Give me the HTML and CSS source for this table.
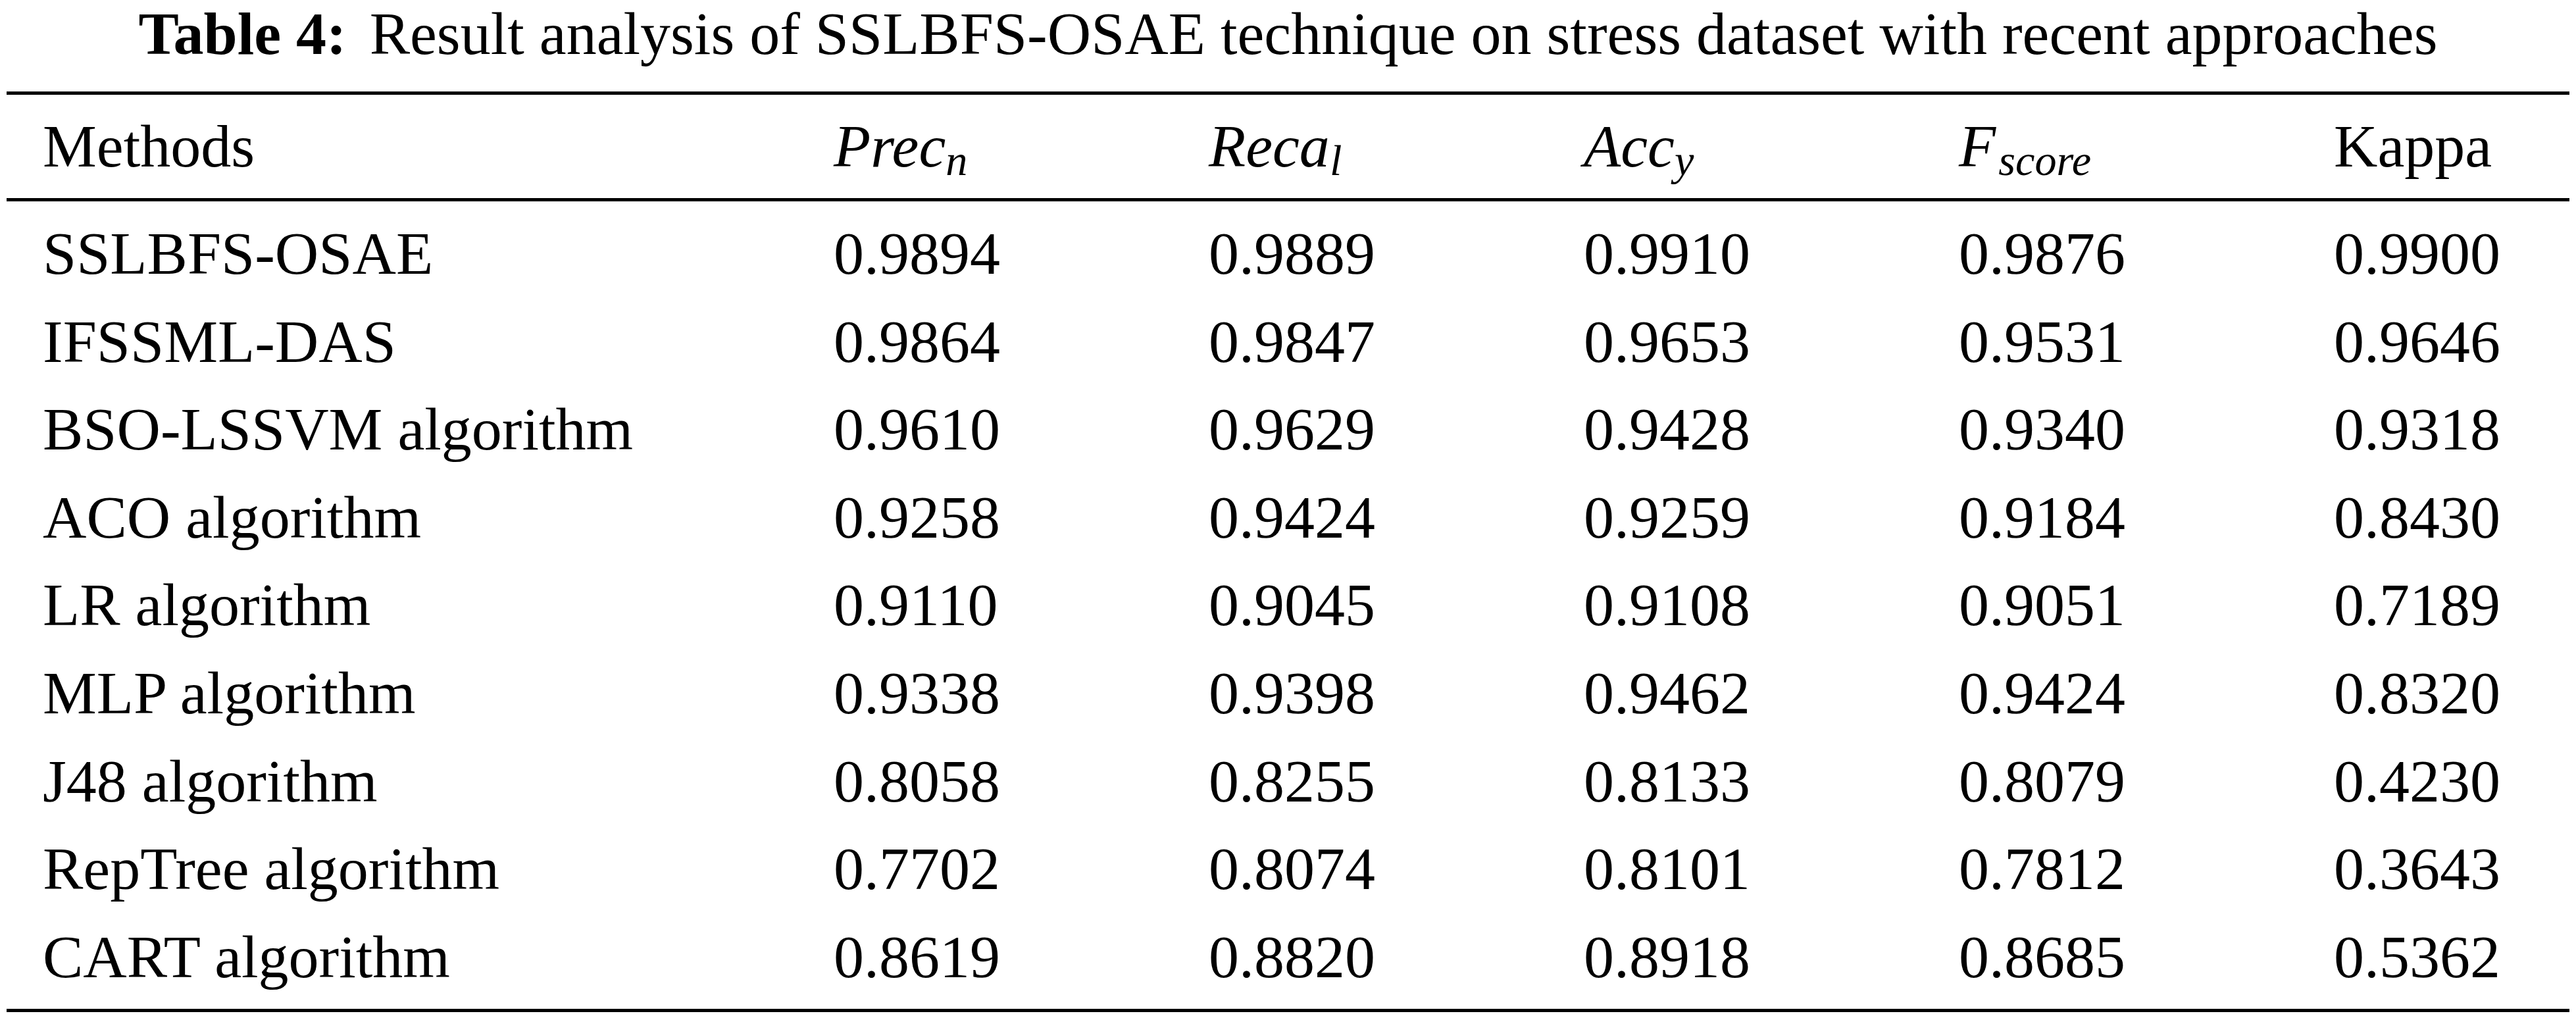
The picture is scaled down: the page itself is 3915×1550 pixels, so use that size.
FILE: index.html
```html
<!DOCTYPE html>
<html lang="en">
<head>
<meta charset="utf-8">
<title>Table 4</title>
<link rel="stylesheet" href="styles.css">
</head>
<body>
<div class="page">
  <div class="caption"><span class="label">Table 4:</span>Result analysis of SSLBFS-OSAE technique on stress dataset with recent approaches</div>
  <div class="table">
    <div class="row head">
      <div class="cell">Methods</div>
      <div class="cell"><i>Prec</i><sub>n</sub></div>
      <div class="cell"><i>Reca</i><sub>l</sub></div>
      <div class="cell"><i>Acc</i><sub>y</sub></div>
      <div class="cell"><i>F</i><sub class="fs">score</sub></div>
      <div class="cell">Kappa</div>
    </div>
    <div class="body">
      <div class="row"><div class="cell">SSLBFS-OSAE</div><div class="cell">0.9894</div><div class="cell">0.9889</div><div class="cell">0.9910</div><div class="cell">0.9876</div><div class="cell">0.9900</div></div>
      <div class="row"><div class="cell">IFSSML-DAS</div><div class="cell">0.9864</div><div class="cell">0.9847</div><div class="cell">0.9653</div><div class="cell">0.9531</div><div class="cell">0.9646</div></div>
      <div class="row"><div class="cell">BSO-LSSVM algorithm</div><div class="cell">0.9610</div><div class="cell">0.9629</div><div class="cell">0.9428</div><div class="cell">0.9340</div><div class="cell">0.9318</div></div>
      <div class="row"><div class="cell">ACO algorithm</div><div class="cell">0.9258</div><div class="cell">0.9424</div><div class="cell">0.9259</div><div class="cell">0.9184</div><div class="cell">0.8430</div></div>
      <div class="row"><div class="cell">LR algorithm</div><div class="cell">0.9110</div><div class="cell">0.9045</div><div class="cell">0.9108</div><div class="cell">0.9051</div><div class="cell">0.7189</div></div>
      <div class="row"><div class="cell">MLP algorithm</div><div class="cell">0.9338</div><div class="cell">0.9398</div><div class="cell">0.9462</div><div class="cell">0.9424</div><div class="cell">0.8320</div></div>
      <div class="row"><div class="cell">J48 algorithm</div><div class="cell">0.8058</div><div class="cell">0.8255</div><div class="cell">0.8133</div><div class="cell">0.8079</div><div class="cell">0.4230</div></div>
      <div class="row"><div class="cell">RepTree algorithm</div><div class="cell">0.7702</div><div class="cell">0.8074</div><div class="cell">0.8101</div><div class="cell">0.7812</div><div class="cell">0.3643</div></div>
      <div class="row"><div class="cell">CART algorithm</div><div class="cell">0.8619</div><div class="cell">0.8820</div><div class="cell">0.8918</div><div class="cell">0.8685</div><div class="cell">0.5362</div></div>
    </div>
  </div>
</div>
</body>
</html>
```
FILE: styles.css
```css
html, body {
  margin: 0;
  padding: 0;
  background: #ffffff;
}

body {
  width: 3915px;
  color: #000000;
  font-family: "Liberation Serif", "Times New Roman", serif;
  font-size: 92px;
}

.page {
  padding: 0 10px;
}

.caption {
  text-align: center;
  line-height: 102px;
  height: 102px;
  margin-bottom: 37px;
  white-space: nowrap;
}

.caption .label {
  font-weight: bold;
  margin-right: 35px;
}

.table {
  border-top: 5px solid #000;
  border-bottom: 5px solid #000;
}

.row {
  display: grid;
  grid-template-columns: 1202px 570px 570px 570px 570px 1fr;
  white-space: nowrap;
}

.cell {
  padding-left: 55px;
}

.head {
  height: 157px;
  line-height: 157px;
  border-bottom: 5px solid #000;
}

.head i {
  font-style: italic;
}

.head sub {
  font-style: italic;
  font-size: 0.72em;
  line-height: 0;
  vertical-align: -0.19em;
}

.head sub.fs {
  margin-left: 4px;
}

.body {
  padding-top: 13px;
  padding-bottom: 12px;
}

.body .row {
  height: 133.6px;
  line-height: 133.6px;
}
```
